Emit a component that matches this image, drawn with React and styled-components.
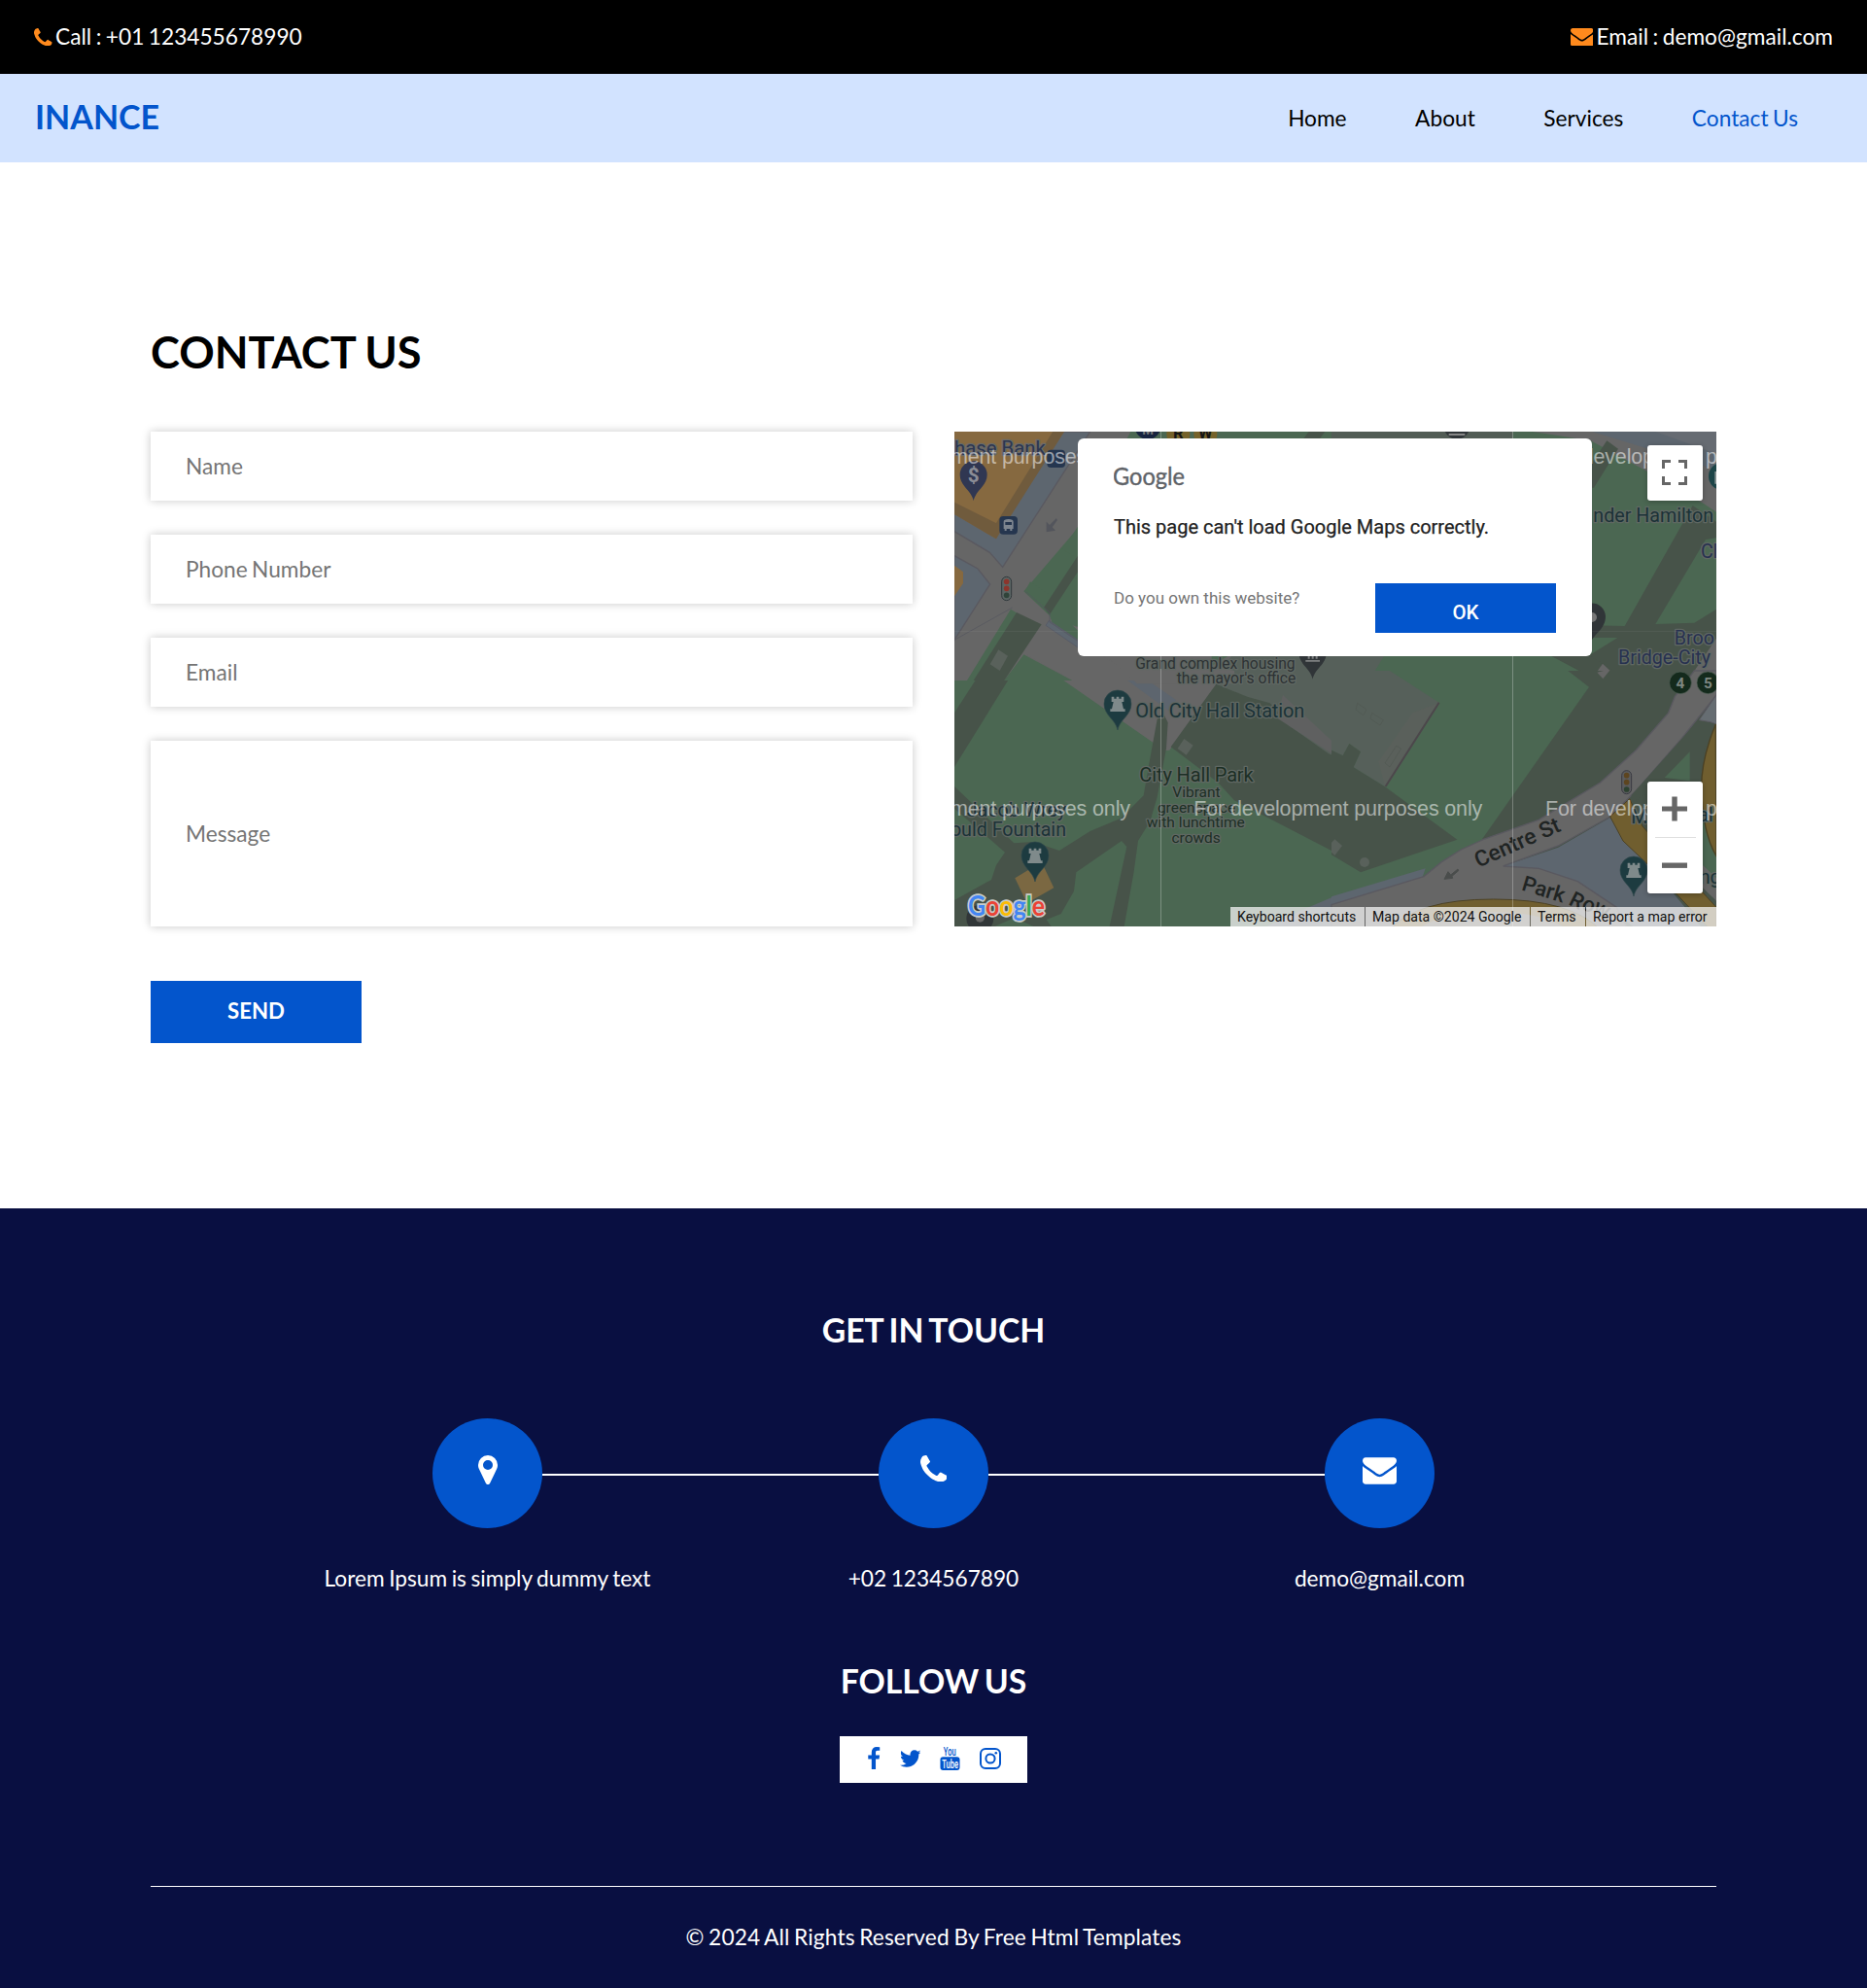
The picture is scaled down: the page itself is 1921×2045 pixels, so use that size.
import React from "react";
import styled, { createGlobalStyle } from "styled-components";

const GlobalStyle = createGlobalStyle`
  *, *::before, *::after { box-sizing: border-box; }
  body {
    margin: 0;
    background: #fff;
    color: #0c0c0c;
    font-family: Lato, "Liberation Sans", sans-serif;
    font-size: 22.7px;
    word-spacing: -1.3px;
  }
`;

/* ---------- icons ---------- */

const ICONS = {
  phone: {
    box: "192 128 1408 1408",
    d: "M1600 1240q0 27-10 70.5t-21 68.5q-21 50-122 106-94 51-186 51-27 0-53-3.5t-57.5-12.5-47-14.5-55.5-20.5-49-18q-98-35-175-83-127-79-264-216t-216-264q-48-77-83-175-3-9-18-49t-20.5-55.5-14.5-47-12.5-57.5-3.5-53q0-92 51-186 56-101 106-122 25-11 68.5-21t70.5-10q14 0 21 3 18 6 53 76 11 19 30 54t35 63.5 31 53.5q3 4 17.5 25t21.5 35.5 7 28.5q0 20-28.5 50t-62 55-62 53-28.5 46q0 9 5 22.5t8.5 20.5 14 24 11.5 19q76 137 174 235t235 174q2 1 19 11.5t24 14 20.5 8.5 22.5 5q18 0 46-28.5t53-62 55-62 50-28.5q14 0 28.5 7t35.5 21.5 25 17.5q25 15 53.5 31t63.5 35 54 30q70 35 76 53 3 7 3 21z",
  },
  envelope: {
    box: "0 256 1792 1408",
    d: "M1792 710v794q0 66-47 113t-113 47h-1472q-66 0-113-47t-47-113v-794q44 49 101 87 362 246 497 345 57 42 92.5 65.5t94.5 48 110 24.5h2q51 0 110-24.5t94.5-48 92.5-65.5q170-123 498-345 57-39 100-87zm0-294q0 79-49 151t-122 123q-376 261-468 325-10 7-42.5 31t-54 38.5-52 32.5-57.5 27-50 9h-2q-23 0-50-9t-57.5-27-52-32.5-54-38.5-42.5-31q-91-64-262-182.5t-205-142.5q-62-42-117-115.5t-55-136.5q0-78 41.5-130t118.5-52h1472q65 0 112.5 47t47.5 113z",
  },
  marker: {
    box: "384 128 1024 1536",
    d: "M1152 640q0-106-75-181t-181-75-181 75-75 181 75 181 181 75 181-75 75-181zm256 0q0 109-33 179l-364 774q-16 33-47.5 52t-67.5 19-67.5-19-46.5-52l-365-774q-33-70-33-179 0-212 150-362t362-150 362 150 150 362z",
  },
  facebook: {
    box: "479 0 864 1664",
    d: "M1343 12v264h-157q-86 0-116 36t-30 108v189h293l-39 296h-254v759h-306v-759h-255v-296h255v-218q0-186 104-288.5t277-102.5q147 0 228 12z",
  },
  twitter: {
    box: "108 256 1576 1280",
    d: "M1684 408q-67 98-162 167 1 14 1 42 0 130-38 259.5t-115.5 248.5-184.5 210.5-258 146-323 54.5q-271 0-496-145 35 4 78 4 225 0 401-138-105-2-188-64.5t-114-159.5q33 5 61 5 43 0 85-11-112-23-185.5-111.5t-73.5-205.5v-4q68 38 146 41-66-44-105-115t-39-154q0-88 44-163 121 149 294.5 238.5t371.5 99.5q-8-38-8-74 0-134 94.5-228.5t228.5-94.5q140 0 236 102 109-21 205-78-37 115-142 178 93-10 186-50z",
  },
};

const Glyph = styled.svg`
  display: block;
  flex: none;
  fill: currentColor;
`;

const Icon = ({ name, width, height }) => (
  <Glyph viewBox={ICONS[name].box} width={width} height={height}>
    <path d={ICONS[name].d} />
  </Glyph>
);

const YoutubeIcon = () => (
  <Glyph viewBox="0 0 22 26" width="21" height="26">
    <text x="4" y="10" fontFamily="Roboto, sans-serif" fontWeight="500" fontSize="12.5" textLength="13.5" lengthAdjust="spacingAndGlyphs">You</text>
    <rect x="0.5" y="11.2" width="21" height="14.3" rx="3" />
    <text x="2.4" y="23.2" fill="#fff" fontFamily="Roboto, sans-serif" fontWeight="500" fontSize="12.5" textLength="17.6" lengthAdjust="spacingAndGlyphs">Tube</text>
  </Glyph>
);

const InstagramIcon = () => (
  <Glyph viewBox="0 0 22 22" width="22" height="22">
    <rect x="1" y="1" width="20" height="20" rx="5" fill="none" stroke="currentColor" strokeWidth="2" />
    <circle cx="11" cy="11" r="4.6" fill="none" stroke="currentColor" strokeWidth="2" />
    <circle cx="16.8" cy="5.2" r="1.3" />
  </Glyph>
);

/* ---------- header ---------- */

const TopBar = styled.div`
  display: flex;
  justify-content: space-between;
  align-items: center;
  height: 76px;
  padding: 0 35px;
  background: #000;
  color: #fff;
`;

const TopLink = styled.a`
  display: flex;
  align-items: center;
  gap: 3.5px;
  line-height: 30px;
  color: #ff8a1d;
  span { color: #fff; }
`;

const NavBar = styled.header`
  display: flex;
  justify-content: space-between;
  align-items: center;
  height: 91px;
  padding: 0 71px 0 36px;
  background: #d2e3ff;
`;

const Brand = styled.a`
  padding-bottom: 3px;
  font-size: 34px;
  font-weight: 700;
  line-height: 42px;
  color: #0355cc;
`;

const Nav = styled.nav`
  display: flex;
  gap: 70.5px;
`;

const NavLink = styled.a`
  color: ${(p) => (p.$active ? "#0355cc" : "#000")};
`;

/* ---------- contact section ---------- */

const Contact = styled.main`
  height: 1076px;
  padding: 167px 155px 0;
`;

const Title = styled.h2`
  margin: 0 0 54px;
  font-size: 45.2px;
  font-weight: 700;
  line-height: 56px;
  color: #000;
`;

const Columns = styled.div`
  display: grid;
  grid-template-columns: 784px 784px;
  column-gap: 43px;
  align-items: start;
`;

const Form = styled.form`
  display: flex;
  flex-direction: column;
  gap: 35px;
`;

const Field = styled.input`
  width: 100%;
  height: ${(p) => p.$height || 71}px;
  padding: 0 36px;
  border: none;
  outline: none;
  background: #fff;
  box-shadow: 0 0 9px rgba(0, 0, 0, 0.22);
  font: 22.7px Lato, sans-serif;
  word-spacing: -1.5px;
  &::placeholder { color: #757575; opacity: 1; }
`;

const Send = styled.button`
  width: 217px;
  height: 64px;
  margin: 21px 0 0;
  padding: 0 0 3px;
  border: none;
  background: #0355cc;
  color: #fff;
  font: 700 22.2px Lato, sans-serif;
`;

/* ---------- map ---------- */

const MapFrame = styled.div`
  position: relative;
  width: 784px;
  height: 509px;
  overflow: hidden;
  font-family: Roboto, sans-serif;
  word-spacing: 0;
`;

const MapDrawing = styled.svg`
  display: block;
  width: 784px;
  height: 509px;
`;

const Dialog = styled.div`
  position: absolute;
  left: 127px;
  top: 7px;
  width: 529px;
  height: 224px;
  padding: 26px 37px 0;
  border-radius: 6px;
  background: #fff;
`;

const DialogLogo = styled.svg`
  display: block;
`;

const DialogText = styled.p`
  margin: 20px 0 0;
  font-size: 20px;
  font-weight: 400;
  line-height: 30px;
  color: #212121;
  -webkit-text-stroke: 0.25px #212121;
  white-space: nowrap;
`;

const DialogFoot = styled.div`
  display: flex;
  justify-content: space-between;
  align-items: flex-start;
  margin-top: 43px;
`;

const Own = styled.a`
  padding-top: 3px;
  font-size: 17px;
  font-weight: 400;
  line-height: 24px;
  color: #757575;
`;

const Ok = styled.button`
  width: 186px;
  height: 51px;
  padding: 8px 0 0;
  border: none;
  background: #0355cc;
  color: #fff;
  font: 500 20.5px Roboto, sans-serif;
`;

const Control = styled.div`
  position: absolute;
  right: 14px;
  ${(p) => (p.$bottom ? "bottom: 34px;" : "top: 14px;")}
  width: 57px;
  display: flex;
  flex-direction: column;
  align-items: center;
  border-radius: 3px;
  background: #fff;
  box-shadow: 0 1px 5px rgba(0, 0, 0, 0.3);
`;

const ControlButton = styled.div`
  display: flex;
  align-items: center;
  justify-content: center;
  width: 57px;
  height: 57px;
  padding: 0 1px 1px 0;
`;

const ControlRule = styled.div`
  width: 42px;
  height: 1px;
  background: #e0e0e0;
`;

const Attribution = styled.div`
  position: absolute;
  right: 0;
  bottom: 0;
  display: flex;
  height: 20px;
`;

const Credit = styled.span`
  width: ${(p) => p.$w}px;
  padding-left: 7px;
  margin-left: 1px;
  background: rgba(245, 245, 245, 0.74);
  font-size: 14.1px;
  line-height: 20px;
  color: #111;
  white-space: nowrap;
`;

const pinPath = "M0 81C-6 48-42 36-42 0A42 42 0 1 1 42 0C42 36 6 48 0 81Z";

const Castle = ({ x, y, fill = "#1d3b40" }) => (
  <g transform={`translate(${x} ${y})`}>
    <path d={pinPath} fill={fill} stroke="#31494b" strokeWidth="2" />
    <path d="M-19-22h8v6h7v-6h8v6h7v-6h8v16h-6l5 22h5v8h-46v-8h5l5-22h-6z" fill="#7f8a8b" />
  </g>
);

const Label = ({ x, y, size = 59, fill = "#1b3237", children, ...rest }) => (
  <text x={x} y={y} fontSize={size} fill={fill} stroke="#5f6762" strokeWidth="8" strokeLinejoin="round" paintOrder="stroke" {...rest}>
    {children}
  </text>
);

const CityMap = () => (
  <MapDrawing viewBox="982 444 784 509" fontFamily="Roboto, sans-serif">
    <rect x="982" y="444" width="784" height="509" fill="#4b6752" />

    {/* south-west: park paths and the block north of the park */}
    <g transform="translate(970 690) scale(.33333)">
      <path d="M330 0 650 222 680 247 700 245 840 50 900-60 0-60z" fill="#666" />
      <path d="M845 40 704 235 850 345 900 400 1200 555 1200-60 900-60z" fill="#475349" />
      <path d="M840 40 900-60 1240-60 1240 280 1190 255 1070 170 1010 100 940 80z" fill="#56605a" />
      <path d="M1050 75 1200 215 1200 255 1030 145z" fill="#5f6060" />
      <path d="M120 0 220 0 36 297 36 130z" fill="#475349" />
      <path d="M530 0 590 0 720 90 700 125z" fill="#5d656e" />
      <path d="M36 357 220 532 280 528 360 555 455 495 550 455 620 385 640 270 662 150 680 130 695 160 690 240 662 390 640 465 603 525 590 620 560 789 515 789 568 543 552 525 412 622 405 680 365 750 320 768 335 789 280 789 222 762 160 789 36 789 36 708 150 645 165 600 192 560 36 425z" fill="#475349" />
      <path d="M745 210 773 230 752 260 725 240z" fill="#59615b" />
      <path d="M223 640 305 590 343 670 260 717z" fill="#7b6842" />
      <circle cx="115" cy="765" r="42" fill="#313638" />
      <circle cx="115" cy="762" r="14" fill="#666" />
      <path d="M1110 738 1200 700 1200 789 1000 789z" fill="#5d656e" />
    </g>

    {/* north-west: streets and shops */}
    <g transform="translate(970 430) scale(.33333)">
      <path d="M36 42H600L417 340 250 535 330 610 345 650 625 810H400L255 728 190 810H36z" fill="#666" />
      <path d="M400 640 900 780V820H600z" fill="#666" />
      <path d="M580 42H1200V80H560z" fill="#4b6752" />
      <path d="M1130 42h50l-30 40h-50z" fill="#475349" />
      <path d="M36 42H455L185 460 145 415 36 350z" fill="#5d666f" stroke="#5a5960" strokeWidth="4" />
      <path d="M36 42H375L175 345 165 373 36 297z" fill="#7c6443" />
      <path d="M36 42H340L165 325 36 260z" fill="#866940" />
      <path d="M165 325 165 373 36 297V260zM375 42 165 373V325L340 42z" fill="#705b3d" />
      <path d="M36 425 108 465 146 513 36 685z" fill="#5d666f" stroke="#5a5960" strokeWidth="4" />
      <path d="M36 455 63 475V510L36 550z" fill="#866940" />
      <path d="M417 335 370 405 402 425 417 415zM417 470 398 490 417 498zM270 505 254 535 325 585 345 555z" fill="#4b6752" />
      <path d="M417 425 417 475 330 607 312 585z" fill="#475349" />
      <path d="M210 590 250 615 130 810H75z" fill="#4b6752" />
      <path d="M228 600 305 637 190 810H95z" fill="#475349" />
      <path d="M172 715 201 734 176 780 146 760z" fill="#59615b" />
      <path d="M250 730 400 810H190z" fill="#4b6752" />
      <path d="M328 625 417 685V708L318 640z" fill="#5d666f" stroke="#585b66" strokeWidth="3" />
      <path d="M255 535 330 600V630L417 688M36 685 215 585" fill="none" stroke="#55565f" strokeWidth="3" opacity=".7" />
      <path d="M350 310 330 330 320 320V352L348 347 338 337 354 315z" fill="#53555c" />
      <path d="M830 735h50l-50 30z" fill="#4b6752" />

      <rect x="322" y="98" width="56" height="55" rx="12" fill="#25364f" />
      <rect x="175" y="303" width="56" height="56" rx="12" fill="#25364f" />
      <path d="M188 320q0-8 15-8t15 8v22h-4v6h-6v-6h-11v6h-6v-6h-3zM193 321v9h20v-9z" fill="#7d858f" fillRule="evenodd" />
      <rect x="182" y="490" width="30" height="73" rx="15" fill="#5b6563" stroke="#30383c" strokeWidth="3" />
      <circle cx="197" cy="505" r="8.5" fill="#8c352c" />
      <circle cx="197" cy="526" r="8.5" fill="#8c352c" />
      <circle cx="197" cy="547" r="8.5" fill="#30443a" />
      <Label x="36" y="113" size="61" fill="#2b3550" stroke="#6a6a68">hase Bank</Label>
      <g transform="translate(95 175)">
        <path d={pinPath} fill="#303752" />
        <text x="0" y="22" fontSize="62" fontWeight="700" textAnchor="middle" fill="#8b8d96">$</text>
      </g>
      <circle cx="633" cy="26" r="40" fill="#17233f" />
      <text x="633" y="50" fontSize="40" fontWeight="700" textAnchor="middle" fill="#777">M</text>
      <circle cx="727" cy="50" r="36" fill="#75622a" />
      <circle cx="811" cy="50" r="36" fill="#75622a" />
      <text x="727" y="63" fontSize="50" fontWeight="700" textAnchor="middle" fill="#151515">R</text>
      <text x="811" y="63" fontSize="50" fontWeight="700" textAnchor="middle" fill="#151515">W</text>
      <Label x="1088" y="775" size="47" textAnchor="end" fill="#2d3234">Grand complex housing</Label>
      <g transform="translate(1142 725)">
        <path d={pinPath} fill="#303538" />
        <path d="M-22 22h44v5h-44zM-15 0h6v18h-6zM-3 0h6v18h-6zM9 0h6v18h-6z" fill="#7d8080" />
      </g>
    </g>

    {/* north-east */}
    <g transform="translate(1370 430) scale(.33333)">
      <path d="M0 42H560V70H0z" fill="#525c55" />
      <path d="M0 730H165L110 820H0z" fill="#56605a" />
      <path d="M620 42H1188V290L1150 265 975 165 800 70z" fill="#666" />
      <path d="M805 42H1188V160z" fill="#5d666f" />
      <path d="M1000 42H1188V110z" fill="#666b72" />
      <path d="M850 70 885 95 810 215H800V145z" fill="#475349" />
      <path d="M1115 270 1188 320V370L1155 375 1000 636 1120 632 1188 590V810H820L680 735 800 730 883 678H800V640L905 642z" fill="#475349" />
      <path d="M680 735H800L920 810H830z" fill="#475349" />
      <path d="M837 758 860 780 840 805 818 785z" fill="#666" />
      <path d="M1188 680 1100 810H1188z" fill="#666" />
      <circle cx="387" cy="25" r="40" fill="#303538" />
      <path d="M362 48h50v6h-50z" fill="#888" />
      <path d="M800 692C812 665 846 650 846 612A42 42 0 0 0 800 572z" fill="#303538" />
      <circle cx="804" cy="615" r="15" fill="#777" />
      <circle cx="1206" cy="180" r="42" fill="#1d4548" />
      <path d="M1183 165h5v38h-5z" fill="#8a9696" />
      <Label x="808" y="322" textLength="371">nder Hamilton</Label>
      <Label x="1140" y="433" fill="#273150">Ch</Label>
      <Label x="1182" y="698" textAnchor="end" fill="#273150">Broo</Label>
      <Label x="1170" y="758" textAnchor="end" fill="#273150">Bridge-City</Label>
    </g>

    {/* south-east */}
    <g transform="translate(1370 690) scale(.33333)">
      <path d="M0 0 730 0 795 50 465 520 385 520 100 310 0 260z" fill="#4b6752" />
      <path d="M0 0H180L332 98 165 358 68 298 90 250 55 225 35 262 0 245z" fill="#56605a" />
      <path d="M332 98 165 358 145 280 250 130z" fill="#5a605b" />
      <path d="M332 98 167 357" stroke="#4c474b" strokeWidth="6" />
      <path d="M80 100 108 120 98 137 75 120zM125 130 160 152 150 168 120 148zM200 232 215 240 180 297 165 285z" fill="none" stroke="#505852" strokeWidth="2" />
      <path d="M0 245 35 262 55 225 90 250 68 298 165 358 388 521 90 622 0 568z" fill="#475349" />
      <path d="M10 520 33 540 10 570 0 560V530z" fill="#59615b" />
      <circle cx="102" cy="591" r="15" fill="#59615b" />
      <path d="M730 0 1188 0V800H900L465 520 795 50z" fill="#475349" />
      <path d="M840 0 858 0 838 25 820 5z" fill="#666" />
      <path d="M0 697 290 610 280 640 0 735z" fill="#5d666f" />
      <path d="M530 603 700 545 865 450 1000 620 1140 789H930L760 650z" fill="#5d666f" />
      <path d="M0 722 285 635 340 590 400 552 470 520 640 460 830 345 940 245 1040 130 1060 80 1120 0H1188V75L1080 210 940 370 860 450 700 540 530 603 640 610 760 650 880 730 915 800H0z" fill="#666" stroke="#5a5960" strokeWidth="4" />
      <path d="M1135 152 1188 75V165L1170 158z" fill="#666d72" stroke="#5a5960" strokeWidth="3" />
      <path d="M1130 155 1188 165 1150 240 1140 345 1020 345 940 400 925 385z" fill="#475349" />
      <path d="M1106 250V340L1028 330z" fill="#4b6752" />
      <path d="M860 450 920 395 960 480 1060 590 1188 730V800H1170L1000 620 900 525z" fill="#705e2f" stroke="#4b4124" strokeWidth="3" />
      <path d="M1146 430 1188 530V700L1146 660z" fill="#4b6752" />
      <path d="M1188 640V710L1146 670V600z" fill="#666" />
      <path d="M1186 165Q1142 270 1142 360Q1145 500 1188 572z" fill="#705e2f" stroke="#4b4124" strokeWidth="4" />
      <path d="M180 800Q260 705 500 705Q740 705 830 800z" fill="#705e2f" stroke="#4b4124" strokeWidth="3" />
      <path d="M260 800Q340 745 500 745Q660 745 730 800z" fill="#6b6961" />
      <path d="M390 612 368 630 360 620 348 643 374 640 372 634 392 617z" fill="#4a4d4c" stroke="#4a4d4c" strokeWidth="3" />
      <circle cx="1077" cy="37" r="34" fill="#142a1c" stroke="#536257" strokeWidth="2" />
      <circle cx="1162" cy="37" r="34" fill="#142a1c" stroke="#536257" strokeWidth="2" />
      <text x="1077" y="54" fontSize="46" fontWeight="700" textAnchor="middle" fill="#7f8781">4</text>
      <text x="1162" y="54" fontSize="46" fontWeight="700" textAnchor="middle" fill="#7f8781">5</text>
      <rect x="896" y="308" width="30" height="72" rx="15" fill="#5b5c5e" stroke="#393a42" strokeWidth="3" />
      <circle cx="911" cy="323" r="8.5" fill="#5d4520" />
      <circle cx="911" cy="344" r="8.5" fill="#5d4520" />
      <circle cx="911" cy="366" r="8.5" fill="#2d4230" />
      <Label x="454" y="608" size="68" fill="#202423" stroke="#666" fontWeight="500" transform="rotate(-24 454 608)">Centre St</Label>
      <Label x="584" y="676" size="66" fill="#202423" stroke="#666" fontWeight="500" transform="rotate(17 584 676)">
        Park <tspan rotate="10">Row</tspan>
      </Label>
      <Label x="925" y="470" fill="#1b3237">M.</Label>
      <Label x="1132" y="466" fill="#1b3237">al</Label>
      <Label x="1136" y="658" fill="#1b3237">ng</Label>
      <Castle x={933} y={615} />
    </g>

    <g transform="translate(970 690) scale(.33333)">
      <Label x="1090" y="40" size="47" textAnchor="end" fill="#2d3234">the mayor's office</Label>
      <Label x="595" y="145" size="60" textLength="522">Old City Hall Station</Label>
      <Label x="607" y="342" size="60" fill="#1c2f25" textLength="352">City Hall Park</Label>
      <Label x="783" y="390" size="46.5" textAnchor="middle" fill="#1c2f25">Vibrant</Label>
      <Label x="783" y="437" size="46.5" textAnchor="middle" fill="#1c2f25">greenspace</Label>
      <Label x="781" y="484" size="46.5" textAnchor="middle" fill="#1c2f25">with lunchtime</Label>
      <Label x="782" y="531" size="46.5" textAnchor="middle" fill="#1c2f25">crowds</Label>
      <Label x="381" y="450" textAnchor="end">Jacob Wrey</Label>
      <Label x="381" y="510" textAnchor="end">ould Fountain</Label>
      <Castle x={540} y={102} />
      <Castle x={285} y={570} />
    </g>

    {/* tile seams */}
    <path d="M1194.5 444V953M1556.5 444V953" stroke="#fff" strokeOpacity=".28" />
    <path d="M982 649.5H1766" stroke="#fff" strokeOpacity=".05" />

    <g fontFamily="'Liberation Sans', sans-serif" fontSize="21.5" fill="#fff" fillOpacity=".53">
      {[476.5, 838.5].map((y) =>
        [866, 1228.3, 1590].map((x) => (
          <text key={x + "-" + y} x={x} y={y} textLength="297">For development purposes only</text>
        ))
      )}
    </g>

    {/* logo */}
    <text x="996" y="942" fontFamily="Lato, sans-serif" fontWeight="700" fontSize="29" stroke="#c9cdca" strokeWidth="3.5" paintOrder="stroke" textLength="79" lengthAdjust="spacingAndGlyphs">
      <tspan fill="#4285f4">G</tspan><tspan fill="#ea4335">o</tspan><tspan fill="#fbbc04">o</tspan><tspan fill="#4285f4">g</tspan><tspan fill="#34a853">l</tspan><tspan fill="#ea4335">e</tspan>
    </text>
  </MapDrawing>
);

/* ---------- footer ---------- */

const Footer = styled.footer`
  display: flex;
  flex-direction: column;
  align-items: center;
  height: 802px;
  padding: 104px 155px 0;
  background: #090f41;
  color: #fff;
`;

const FooterTitle = styled.h4`
  margin: ${(p) => p.$top || 0}px 0 0;
  font-size: 33.75px;
  font-weight: 700;
  line-height: 42px;
  word-spacing: -2.5px;
`;

const Touch = styled.div`
  display: grid;
  grid-template-columns: repeat(3, 459px);
  margin-top: 70px;
`;

const TouchItem = styled.a`
  display: flex;
  flex-direction: column;
  align-items: center;
`;

const TouchRow = styled.div`
  display: flex;
  align-items: center;
  align-self: stretch;
`;

const Line = styled.span`
  flex: 1;
  height: 2px;
  margin-top: 3px;
  background: ${(p) => (p.$on ? "#fff" : "transparent")};
`;

const Disc = styled.span`
  display: flex;
  align-items: center;
  justify-content: center;
  width: 113px;
  height: 113px;
  padding-bottom: ${(p) => p.$lift}px;
  border-radius: 50%;
  background: #0355cc;
`;

const TouchText = styled.span`
  margin-top: 37px;
  line-height: 30px;
`;

const Social = styled.div`
  display: flex;
  align-items: center;
  gap: 20px;
  width: 193px;
  height: 48px;
  margin-top: 36px;
  padding: 0 0 3px 29px;
  background: #fff;
  color: #0355cc;
`;

const Copyright = styled.p`
  align-self: stretch;
  margin: 106px 0 0;
  padding-top: 37px;
  border-top: 1px solid #fff;
  text-align: center;
  line-height: 30px;
  letter-spacing: 0.12px;
`;

export default function App() {
  return (
    <>
      <GlobalStyle />
      <TopBar>
        <TopLink>
          <Icon name="phone" width={18.5} height={18.5} />
          <span>Call : +01 123455678990</span>
        </TopLink>
        <TopLink>
          <Icon name="envelope" width={23.5} height={18.5} />
          <span>Email : demo@gmail.com</span>
        </TopLink>
      </TopBar>
      <NavBar>
        <Brand>INANCE</Brand>
        <Nav>
          <NavLink>Home</NavLink>
          <NavLink>About</NavLink>
          <NavLink>Services</NavLink>
          <NavLink $active>Contact Us</NavLink>
        </Nav>
      </NavBar>

      <Contact>
        <Title>CONTACT US</Title>
        <Columns>
          <Form>
            <Field placeholder="Name" />
            <Field placeholder="Phone Number" />
            <Field placeholder="Email" />
            <Field placeholder="Message" $height={191} />
            <Send type="button">SEND</Send>
          </Form>
          <MapFrame>
            <CityMap />
            <Control>
              <ControlButton>
                <svg width="26" height="26" viewBox="0 0 26 26" fill="none" stroke="#666" strokeWidth="3">
                  <path d="M1.5 9V1.5H9M17 1.5h7.5V9M24.5 17v7.5H17M9 24.5H1.5V17" />
                </svg>
              </ControlButton>
            </Control>
            <Control $bottom>
              <ControlButton>
                <svg width="26" height="26" viewBox="0 0 26 26" fill="#666">
                  <path d="M10.3 0.5h5.4v10h10.3v5H15.7v10h-5.4v-10H0v-5h10.3z" />
                </svg>
              </ControlButton>
              <ControlRule />
              <ControlButton>
                <svg width="26" height="26" viewBox="0 0 26 26" fill="#666">
                  <path d="M0 10.5h26v5.4H0z" />
                </svg>
              </ControlButton>
            </Control>
            <Attribution>
              <Credit $w={138}>Keyboard shortcuts</Credit>
              <Credit $w={169}>Map data ©2024 Google</Credit>
              <Credit $w={56}>Terms</Credit>
              <Credit $w={134}>Report a map error</Credit>
            </Attribution>
            <Dialog>
              <DialogLogo width="76" height="30" viewBox="0 0 76 30">
                <text x="-1" y="21.5" fontFamily="Lato, sans-serif" fontSize="25" fill="#5f6368" stroke="#5f6368" strokeWidth=".4" textLength="74" lengthAdjust="spacingAndGlyphs">Google</text>
              </DialogLogo>
              <DialogText>This page can't load Google Maps correctly.</DialogText>
              <DialogFoot>
                <Own>Do you own this website?</Own>
                <Ok type="button">OK</Ok>
              </DialogFoot>
            </Dialog>
          </MapFrame>
        </Columns>
      </Contact>

      <Footer>
        <FooterTitle>GET IN TOUCH</FooterTitle>
        <Touch>
          <TouchItem>
            <TouchRow>
              <Line />
              <Disc $lift={7}><Icon name="marker" width={20} height={30} /></Disc>
              <Line $on />
            </TouchRow>
            <TouchText>Lorem Ipsum is simply dummy text</TouchText>
          </TouchItem>
          <TouchItem>
            <TouchRow>
              <Line $on />
              <Disc $lift={10}><Icon name="phone" width={27.5} height={27.5} /></Disc>
              <Line $on />
            </TouchRow>
            <TouchText>+02 1234567890</TouchText>
          </TouchItem>
          <TouchItem>
            <TouchRow>
              <Line $on />
              <Disc $lift={5}><Icon name="envelope" width={35} height={28} /></Disc>
              <Line />
            </TouchRow>
            <TouchText>demo@gmail.com</TouchText>
          </TouchItem>
        </Touch>
        <FooterTitle $top={69}>FOLLOW US</FooterTitle>
        <Social>
          <Icon name="facebook" width={12.5} height={23} />
          <Icon name="twitter" width={21.5} height={18} />
          <YoutubeIcon />
          <InstagramIcon />
        </Social>
        <Copyright>© 2024 All Rights Reserved By Free Html Templates</Copyright>
      </Footer>
    </>
  );
}
